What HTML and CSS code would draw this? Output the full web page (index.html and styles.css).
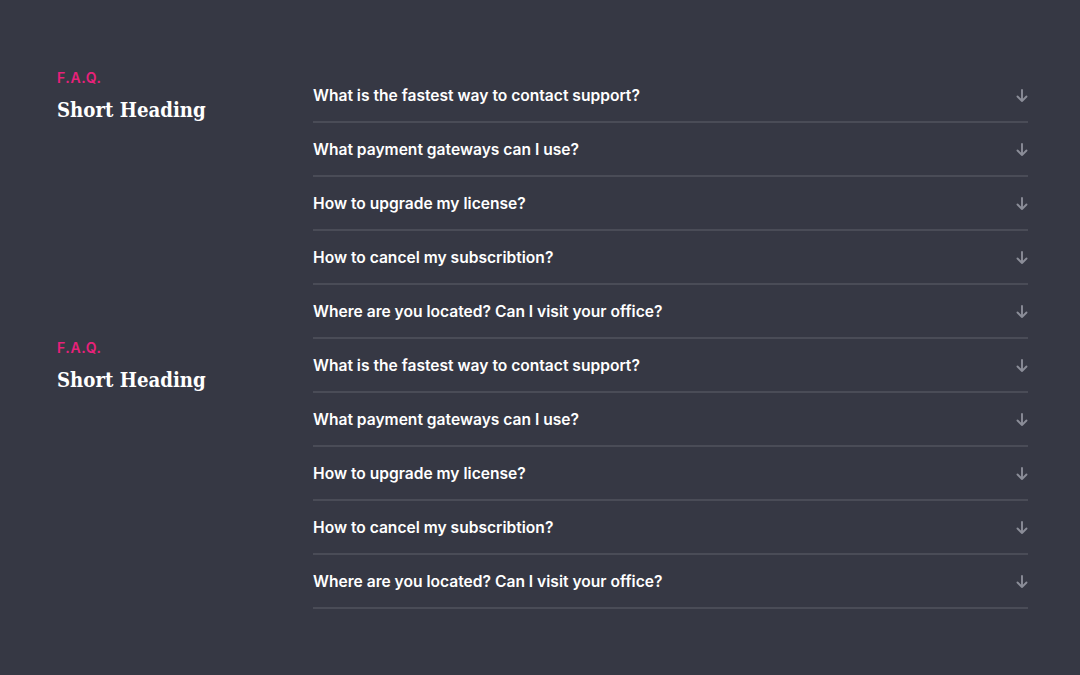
FILE: index.html
```html
<!DOCTYPE html>
<html>
<head>
<meta charset="utf-8">
<link rel="stylesheet" href="styles.css">
</head>
<body>
<main class="page">
  <section class="faq">
    <div class="intro">
      <div class="eyebrow">F.A.Q.</div>
      <h2 class="title">Short Heading</h2>
    </div>
    <ul class="list">
      <li class="item"><span>What is the fastest way to contact support?</span><svg class="arrow" viewBox="0 0 12 14"><path d="M6 1v11M1.5 7.5L6 12l4.5-4.5"/></svg></li>
      <li class="item"><span>What payment gateways can I use?</span><svg class="arrow" viewBox="0 0 12 14"><path d="M6 1v11M1.5 7.5L6 12l4.5-4.5"/></svg></li>
      <li class="item"><span>How to upgrade my license?</span><svg class="arrow" viewBox="0 0 12 14"><path d="M6 1v11M1.5 7.5L6 12l4.5-4.5"/></svg></li>
      <li class="item"><span>How to cancel my subscribtion?</span><svg class="arrow" viewBox="0 0 12 14"><path d="M6 1v11M1.5 7.5L6 12l4.5-4.5"/></svg></li>
      <li class="item"><span>Where are you located? Can I visit your office?</span><svg class="arrow" viewBox="0 0 12 14"><path d="M6 1v11M1.5 7.5L6 12l4.5-4.5"/></svg></li>
    </ul>
  </section>
  <section class="faq">
    <div class="intro">
      <div class="eyebrow">F.A.Q.</div>
      <h2 class="title">Short Heading</h2>
    </div>
    <ul class="list">
      <li class="item"><span>What is the fastest way to contact support?</span><svg class="arrow" viewBox="0 0 12 14"><path d="M6 1v11M1.5 7.5L6 12l4.5-4.5"/></svg></li>
      <li class="item"><span>What payment gateways can I use?</span><svg class="arrow" viewBox="0 0 12 14"><path d="M6 1v11M1.5 7.5L6 12l4.5-4.5"/></svg></li>
      <li class="item"><span>How to upgrade my license?</span><svg class="arrow" viewBox="0 0 12 14"><path d="M6 1v11M1.5 7.5L6 12l4.5-4.5"/></svg></li>
      <li class="item"><span>How to cancel my subscribtion?</span><svg class="arrow" viewBox="0 0 12 14"><path d="M6 1v11M1.5 7.5L6 12l4.5-4.5"/></svg></li>
      <li class="item"><span>Where are you located? Can I visit your office?</span><svg class="arrow" viewBox="0 0 12 14"><path d="M6 1v11M1.5 7.5L6 12l4.5-4.5"/></svg></li>
    </ul>
  </section>
</main>
</body>
</html>
```
FILE: styles.css
```css
html, body {
  margin: 0;
  padding: 0;
  background: #363844;
}
.page {
  padding: 69px 52px 0 57px;
  height: 675px;
  box-sizing: border-box;
}
.faq {
  display: flex;
  align-items: flex-start;
}
.intro {
  width: 256px;
  flex: none;
}
.eyebrow {
  font-family: Inter, "Noto Sans", sans-serif;
  font-weight: 600;
  font-size: 14px;
  line-height: 18px;
  color: #e8217a;
  letter-spacing: 0.6px;
}
.title {
  margin: 9px 0 0;
  font-family: "DejaVu Serif Condensed", "DejaVu Serif", serif;
  font-weight: 700;
  font-size: 20.2px;
  line-height: 28px;
  color: #ffffff;
}
.list {
  list-style: none;
  margin: 0;
  padding: 0;
  flex: 1;
}
.item {
  height: 54px;
  box-sizing: border-box;
  border-bottom: 2px solid #4a4c57;
  display: flex;
  align-items: center;
  justify-content: space-between;
  font-family: Inter, "Noto Sans", sans-serif;
  font-weight: 600;
  font-size: 15.6px;
  color: #ffffff;
}
.arrow {
  width: 12px;
  height: 14px;
  margin-top: 2px;
  fill: none;
  stroke: #8b8d98;
  stroke-width: 1.9;
  stroke-linecap: round;
  stroke-linejoin: round;
}
```
